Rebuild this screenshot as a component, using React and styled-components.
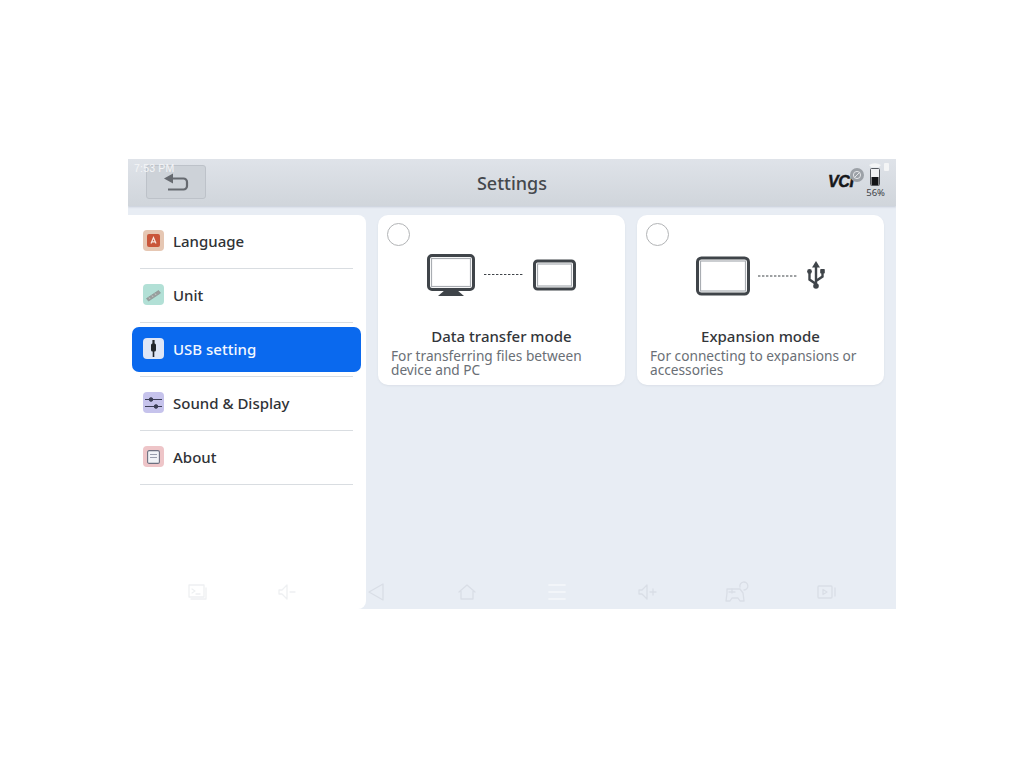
import React from "react";
import styled, { createGlobalStyle } from "styled-components";

const Global = createGlobalStyle`
  html, body { margin: 0; padding: 0; background: #fff; }
  body { font-family: "Noto Sans", "Open Sans", sans-serif; }
`;
const Page = styled.div`
  width: 1024px; height: 768px; padding-top: 159px; box-sizing: border-box; overflow: hidden;
`;
const Device = styled.div`
  position: relative; width: 768px; height: 450px; margin: 0 auto; background: #e8edf4;
  display: flex; flex-direction: column; overflow: hidden;
`;
const Header = styled.header`
  position: relative; height: 47px; flex: none; display: flex; align-items: center; justify-content: center;
  background: linear-gradient(#dfe3e9, #d0d5db); box-shadow: 0 1px 2px rgba(120,130,145,.3);
`;
const Clock = styled.span`
  position: absolute; left: 6px; top: 3px; font: 10.5px "Liberation Sans", sans-serif; color: #f4f5f7; letter-spacing: .2px; z-index: 1;
`;
const BackButton = styled.button`
  position: absolute; left: 18px; top: 6px; width: 60px; height: 34px; padding: 0; display: flex; align-items: center; justify-content: center;
  border: 1px solid #bdc2c9; border-radius: 3px; background: #cdd2d8;
`;
const Title = styled.h1`
  margin: 0; font-size: 18px; line-height: 26px; font-weight: 500; color: #44484d;
`;
const Status = styled.div`
  position: absolute; right: 0; top: 2px; width: 68px; height: 40px;
`;
const Vci = styled.span`
  position: absolute; left: 0; top: 13px; font: italic 700 16px/16px "Liberation Sans", sans-serif; color: #15171a;
  -webkit-text-stroke: .5px #15171a; letter-spacing: -.4px;
`;
const VciBadge = styled.span`
  position: absolute; left: 22px; top: 7px; width: 14px; height: 14px; border-radius: 50%; background: #9ca1a7; display: flex; align-items: center; justify-content: center;
`;
const BatteryWrap = styled.span`
  position: absolute; left: 40px; top: 1px;
`;
const Percent = styled.span`
  position: absolute; right: 11px; top: 26px; font-size: 9.5px; line-height: 12px; color: #3f4348;
`;
const Body = styled.div`
  flex: 1; min-height: 0; margin-top: 9px; display: flex;
`;
const Sidebar = styled.nav`
  width: 238px; flex: none; background: #fff; border-radius: 0 8px 8px 0; padding: 0 5px 0 4px; box-sizing: border-box;
  display: flex; flex-direction: column;
`;
const Item = styled.div`
  height: 54px; display: flex; flex-direction: column; position: relative;
`;
const ItemRow = styled.div`
  height: 45px; box-sizing: border-box; margin-top: 4px; padding: 0 0 2px 11px; display: flex; align-items: center; gap: 9px; border-radius: 7px;
  background: ${p => (p.$active ? "#0a69ee" : "transparent")};
  color: ${p => (p.$active ? "#f4f8ff" : "#2f3236")};
  font-size: 15px; font-weight: 500; line-height: 20px;
`;
const ItemIcon = styled.span`
  width: 21px; height: 21px; border-radius: 4px; background: ${p => p.$bg}; display: flex; align-items: center; justify-content: center; flex: none;
`;
const Divider = styled.div`
  margin: 4px 8px 0; height: 1px; background: #d9dde1; flex: none;
`;
const Content = styled.main`
  flex: 1; display: flex; align-items: flex-start; gap: 12px; padding: 0 12px;
`;
const Card = styled.section`
  position: relative; flex: 1; height: 170px; border-radius: 10px; background: #fff; box-sizing: border-box; padding: 0 13px;
  box-shadow: 0 1px 2px rgba(120,130,150,.12);
`;
const Radio = styled.span`
  position: absolute; left: 9px; top: 8px; width: 21px; height: 21px; border: 1px solid #b2b4b6; border-radius: 50%; background: #fff;
`;
const Diagram = styled.div`
  height: 111px; display: flex; align-items: center; justify-content: center; padding-top: 11px; box-sizing: border-box;
`;
const CardTitle = styled.h2`
  margin: 0; text-align: center; font-size: 15px; font-weight: 500; line-height: 20px; color: #33363a;
`;
const CardDesc = styled.p`
  margin: 3px 0 0; font-size: 13.7px; line-height: 14px; color: #6a6f76;
`;
const SystemBar = styled.div`
  position: absolute; left: 0; right: 0; bottom: 0; height: 38px; display: flex; align-items: center;
  padding: 4px 0 0 24px; box-sizing: border-box;
`;
const SystemSlot = styled.span`
  width: 90px; flex: none; display: flex; justify-content: center; color: ${p => p.$c || "#f1f4f8"};
`;

const Glyph = ({ children, w = 22, h = 22, vb = "0 0 22 22" }) => (
  <svg width={w} height={h} viewBox={vb} fill="none" stroke="currentColor" strokeWidth="1.3" strokeLinecap="round" strokeLinejoin="round">{children}</svg>
);

const Screen = ({ w, h, x = 0, y = 0, r = 3.5 }) => (
  <g>
    <rect x={x + 1.5} y={y + 1.5} width={w - 3} height={h - 3} rx={r} fill="#fff" stroke="#3f4449" strokeWidth="3" />
    <rect x={x + 4.5} y={y + 4.5} width={w - 9} height={h - 9} fill="none" stroke="#a9adb2" strokeWidth="1.2" />
  </g>
);

const Dots = () => <line x1="0" y1="0" x2="40" y2="0" stroke="#3f4449" strokeWidth="1.1" strokeDasharray="2.4 1.6" />;

const MenuIcons = {
  language: (
    <svg width="13" height="13" viewBox="0 0 13 13"><rect width="13" height="13" rx="2" fill="#c9563a" /><path d="M4 9.5 6.5 3.5 9 9.5M5 7.8h3" stroke="#f7e6df" strokeWidth="1.2" fill="none" /></svg>
  ),
  unit: (
    <svg width="19" height="19" viewBox="0 0 19 19"><path d="M2.5 13.5 14.5 5.5l2 2.6-12 8z" fill="#9aa09f" stroke="#7f8684" strokeWidth=".5" /><path d="M5 12.5l1 1.4M8 10.5l1 1.4M11 8.5l1 1.4" stroke="#d5d8d6" strokeWidth=".8" /></svg>
  ),
  usb: (
    <svg width="13" height="17" viewBox="0 0 13 17"><rect x="5.4" y="0" width="2.2" height="4" fill="#22262b" /><rect x="4" y="3.5" width="5" height="8" rx="1.5" fill="#22262b" /><rect x="5.7" y="11" width="1.6" height="6" fill="#22262b" /></svg>
  ),
  sound: (
    <svg width="17" height="14" viewBox="0 0 17 14" stroke="#3b3d55" fill="#3b3d55"><path d="M0 3.5h17M0 10.5h17" strokeWidth="1.2" /><circle cx="6" cy="3.5" r="1.8" /><circle cx="11" cy="10.5" r="1.8" /></svg>
  ),
  about: (
    <svg width="13" height="14" viewBox="0 0 13 14"><rect x=".6" y=".6" width="11.8" height="12.8" rx="1.5" fill="#f1f3f7" stroke="#6d7080" strokeWidth="1.1" /><path d="M3 4.5h7M3 7.5h7" stroke="#9a9eae" strokeWidth="1" /></svg>
  ),
};

const items = [
  { label: "Language", icon: "language", bg: "#e6c7b3" },
  { label: "Unit", icon: "unit", bg: "#b2e0d6" },
  { label: "USB setting", icon: "usb", bg: "#dfe6f6", active: true },
  { label: "Sound & Display", icon: "sound", bg: "#c6c3ec" },
  { label: "About", icon: "about", bg: "#eec5c8" },
];

const system = [
  { c: "#eef0f2", el: <Glyph><rect x="3" y="4" width="15" height="12" /><path d="M5 18h15M20 7v11M6 8l3 2-3 2M10 13h4" /></Glyph> },
  { c: "#eef0f2", el: <Glyph><path d="M3 9v4h3l5 5V4L6 9zM14 11h5" /></Glyph> },
  { c: "#d9dee6", el: <Glyph><path d="M17 3 3 11l14 8z" /></Glyph> },
  { c: "#d9dee6", el: <Glyph><path d="M3 11 11 4l8 7M5 10v8h12v-8" /></Glyph> },
  { c: "#f5f7fa", el: <Glyph><path d="M3 4h16M3 11h16M3 18h16" strokeWidth="1.6" /></Glyph> },
  { c: "#d9dee6", el: <Glyph><path d="M3 9v4h3l5 5V4L6 9zM14 11h6M17 8v6" /></Glyph> },
  { c: "#d9dee6", el: <Glyph w={26} h={24} vb="0 0 26 24"><path d="M3 9h13l3 4 1 8h-4l-2-3H8l-2 3H2l1-8z" /><path d="M16 7a4 4 0 1 1 4 3" /><path d="M5 12h6M8 9v4" /></Glyph> },
  { c: "#d9dee6", el: <Glyph><rect x="2" y="5" width="14" height="12" rx="1" /><path d="M7 8.5l4 2.5-4 2.5zM19 7v8" /></Glyph> },
];

export default function App() {
  return (
    <Page>
      <Global />
      <Device>
        <Header>
          <Clock>7:53 PM</Clock>
          <BackButton aria-label="Back">
            <svg width="26" height="19" viewBox="0 0 26 19" fill="none">
              <path d="M4 5.5h16.5a3.5 3.5 0 0 1 3.5 3.5v4a3.5 3.5 0 0 1-3.5 3.5H5" stroke="#666a70" strokeWidth="2.2" />
              <path d="M10 0.5v10L1 5.5z" fill="#666a70" />
            </svg>
          </BackButton>
          <Title>Settings</Title>
          <Status>
            <Vci>VCI</Vci>
            <VciBadge>
              <svg width="10" height="10" viewBox="0 0 10 10" fill="none" stroke="#e4e6e8" strokeWidth="1"><circle cx="5" cy="5" r="3.6" /><path d="M2.5 7.5l5-5" /></svg>
            </VciBadge>
            <BatteryWrap>
              <svg width="24" height="26" viewBox="0 0 24 26">
                <path d="M1 3q6-3.5 12 0l-2.5 2.5h-7z" fill="#f4f5f6" />
                <rect x="16" y="1" width="5" height="8" rx="1" fill="#f4f5f6" />
                <rect x="2.5" y="6.5" width="9" height="17" rx="1" fill="#f0f1f3" stroke="#55595f" strokeWidth="1" />
                <rect x="3.5" y="15" width="7" height="8" fill="#111316" />
              </svg>
            </BatteryWrap>
            <Percent>56%</Percent>
          </Status>
        </Header>
        <Body>
          <Sidebar>
            {items.map(i => (
              <Item key={i.label}>
                <ItemRow $active={i.active}>
                  <ItemIcon $bg={i.bg}>{MenuIcons[i.icon]}</ItemIcon>
                  {i.label}
                </ItemRow>
                <Divider />
              </Item>
            ))}
          </Sidebar>
          <Content>
            <Card>
              <Radio />
              <Diagram>
                <svg width="150" height="44" viewBox="0 0 150 44">
                  <Screen w={48} h={37} x={0} y={0} />
                  <path d="M11 42l7-6h12l7 6z" fill="#3f4449" />
                  <g transform="translate(57 20.5)"><Dots /></g>
                  <Screen w={43} h={31} x={106} y={5.5} r={3} />
                </svg>
              </Diagram>
              <CardTitle>Data transfer mode</CardTitle>
              <CardDesc>For transferring files between device and PC</CardDesc>
            </Card>
            <Card>
              <Radio />
              <Diagram>
                <svg width="132" height="40" viewBox="0 0 132 40">
                  <Screen w={54} h={39} x={1} y={0.5} r={4} />
                  <g transform="translate(63 20)"><Dots /></g>
                  <g fill="#3f4449" stroke="#3f4449">
                    <path d="M121 5 117 11.5h8z" stroke="none" />
                    <path d="M121 10v21M121 28l-6.5-4.5V17M121 25l6.5-4.5V16" fill="none" strokeWidth="2.4" />
                    <circle cx="121" cy="30" r="2.8" stroke="none" />
                    <circle cx="114.5" cy="15.5" r="2.4" stroke="none" />
                    <rect x="125.2" y="13" width="4.6" height="4.6" rx=".8" stroke="none" />
                  </g>
                </svg>
              </Diagram>
              <CardTitle>Expansion mode</CardTitle>
              <CardDesc>For connecting to expansions or accessories</CardDesc>
            </Card>
          </Content>
        </Body>
        <SystemBar>
          {system.map((s, i) => <SystemSlot key={i} $c={s.c}>{s.el}</SystemSlot>)}
        </SystemBar>
      </Device>
    </Page>
  );
}
